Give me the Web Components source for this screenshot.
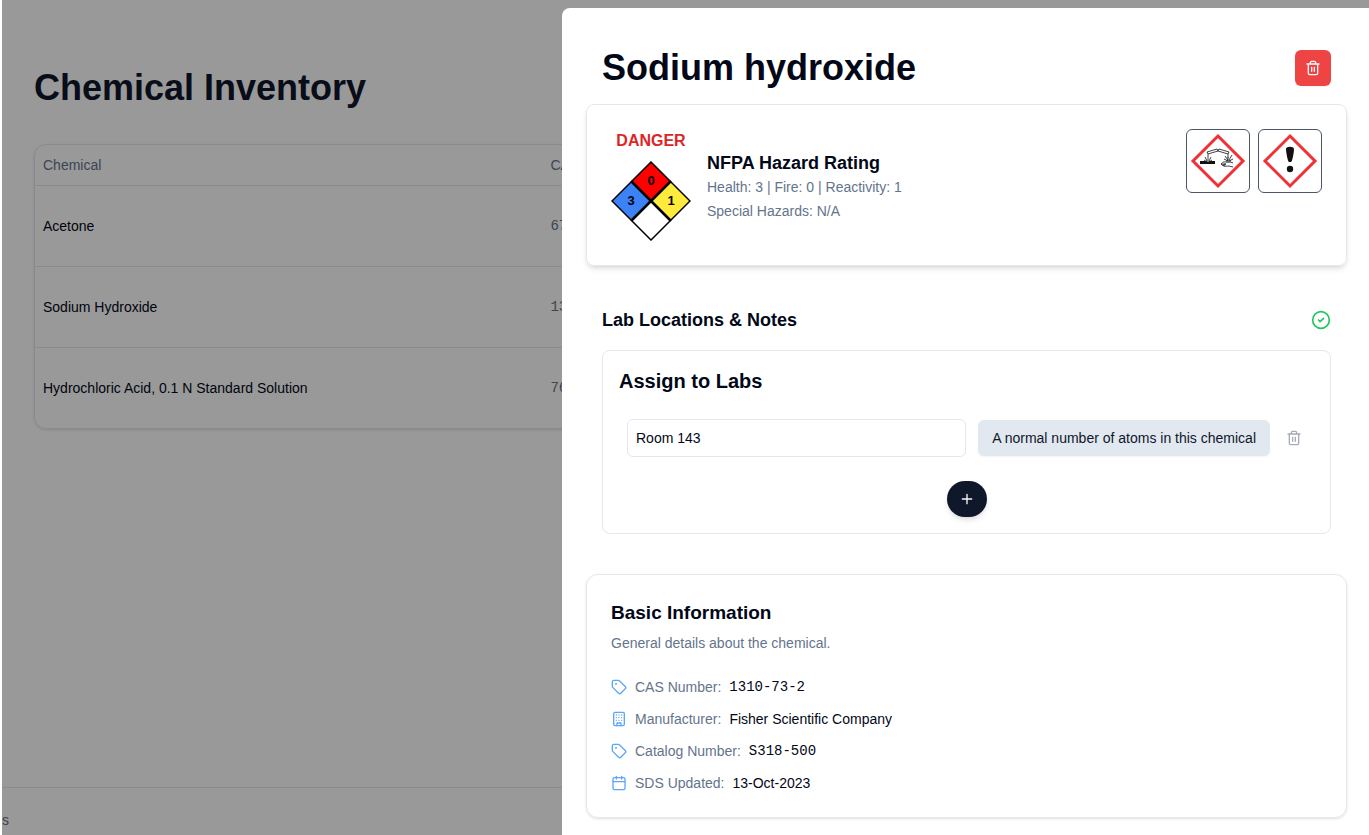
<!DOCTYPE html>
<html lang="en">
<head>
<meta charset="utf-8">
<title>Chemical Inventory</title>
<style>
  :root {
    --foreground: #020817;
    --primary: #0f172a;
    --muted: #64748b;
    --border: #e2e8f0;
    --shadow: 0 1px 3px rgba(0, 0, 0, .1), 0 1px 2px -1px rgba(0, 0, 0, .1);
    --shadow-md: 0 4px 6px -1px rgba(0, 0, 0, .1), 0 2px 4px -2px rgba(0, 0, 0, .1);
    --font-mono: "Liberation Mono", monospace;
  }
  body {
    margin: 0;
    overflow: hidden;
    background: #fff;
    color: var(--foreground);
    font: 14px/20px "Liberation Sans", Arial, sans-serif;
  }
</style>
</head>
<body>

<inventory-page>
  <chemical-table></chemical-table>
  <span slot="footer">s</span>
</inventory-page>

<side-drawer heading="Sodium hydroxide">
  <hazard-card signal="DANGER" health="3" fire="0" reactivity="1">
    <ghs-pictogram type="corrosive"></ghs-pictogram>
    <ghs-pictogram type="irritant"></ghs-pictogram>
  </hazard-card>
  <lab-section room="Room 143" note="A normal number of atoms in this chemical"></lab-section>
  <info-card>
    <span slot="title">Basic Information</span>
    <span slot="description">General details about the chemical.</span>
    <info-row icon="tag" label="CAS Number:" mono>1310-73-2</info-row>
    <info-row icon="building" label="Manufacturer:">Fisher Scientific Company</info-row>
    <info-row icon="tag" label="Catalog Number:" mono>S318-500</info-row>
    <info-row icon="calendar" label="SDS Updated:">13-Oct-2023</info-row>
  </info-card>
</side-drawer>

<script>
const ICONS = {
  trash: '<path d="M3 6h18M19 6v14c0 1-1 2-2 2H7c-1 0-2-1-2-2V6M8 6V4c0-1 1-2 2-2h4c1 0 2 1 2 2v2M10 11v6M14 11v6"/>',
  plus: '<path d="M5 12h14M12 5v14"/>',
  check: '<circle cx="12" cy="12" r="10"/><path d="m9 12 2 2 4-4"/>',
  tag: '<path d="M12.586 2.586A2 2 0 0 0 11.172 2H4a2 2 0 0 0-2 2v7.172a2 2 0 0 0 .586 1.414l8.704 8.704a2.426 2.426 0 0 0 3.42 0l6.58-6.58a2.426 2.426 0 0 0 0-3.42z"/><circle cx="7.5" cy="7.5" r=".5" fill="currentColor"/>',
  building: '<rect width="16" height="20" x="4" y="2" rx="2"/><path d="M9 22v-4h6v4M8 6h.01M16 6h.01M12 6h.01M12 10h.01M12 14h.01M16 10h.01M16 14h.01M8 10h.01M8 14h.01"/>',
  calendar: '<path d="M8 2v4M16 2v4M3 10h18"/><rect width="18" height="18" x="3" y="4" rx="2"/>'
}

customElements.define('line-icon', class extends HTMLElement {
  constructor() {
    super()
    this.attachShadow({mode: 'open'})
  }

  connectedCallback() {
    this.shadowRoot.innerHTML = `
      <style>
        :host { display: block; flex: none; width: 16px; height: 16px; }
        svg { display: block; width: 100%; height: 100%; }
      </style>
      <svg viewBox="0 0 24 24" fill="none" stroke="currentColor" stroke-width="2"
        stroke-linecap="round" stroke-linejoin="round" aria-hidden="true">${ICONS[this.getAttribute('name')]}</svg>
    `
  }
})

customElements.define('inventory-page', class extends HTMLElement {
  constructor() {
    super()
    this.attachShadow({mode: 'open'}).innerHTML = `
      <style>
        :host { display: flex; flex-direction: column; height: 100vh; margin-left: 2px; }
        main { flex: 1; padding: 68px 32px 0; }
        h1 { margin: 0 0 36px; color: var(--primary); font-size: 36px; line-height: 40px; }
        footer {
          border-top: 1px solid var(--border);
          padding: 24px 0 7px;
          line-height: 16px;
          color: #6b7280;
        }
      </style>
      <main><h1>Chemical Inventory</h1><slot></slot></main>
      <footer><slot name="footer"></slot></footer>
    `
  }
})

customElements.define('chemical-table', class extends HTMLElement {
  constructor() {
    super()
    const rows = [
      ['Acetone', '67'],
      ['Sodium Hydroxide', '1310'],
      ['Hydrochloric Acid, 0.1 N Standard Solution', '7647']
    ]
    this.attachShadow({mode: 'open'}).innerHTML = `
      <style>
        :host {
          display: block;
          border: 1px solid var(--border);
          border-radius: 12px;
          box-shadow: var(--shadow);
        }
        table { width: 100%; border-collapse: collapse; table-layout: fixed; }
        th, td { box-sizing: border-box; padding: 0 8px; text-align: left; font-weight: 400; }
        th { height: 40px; color: var(--muted); }
        th:first-child { width: 39%; }
        td { height: 81px; border-top: 1px solid var(--border); }
        td:last-child { color: var(--muted); font-family: var(--font-mono); }
      </style>
      <table>
        <thead><tr><th>Chemical</th><th>CAS</th></tr></thead>
        <tbody>${rows.map(([name, cas]) => `<tr><td>${name}</td><td>${cas}</td></tr>`).join('')}</tbody>
      </table>
    `
  }
})

customElements.define('side-drawer', class extends HTMLElement {
  constructor() {
    super()
    this.attachShadow({mode: 'open'})
  }

  connectedCallback() {
    this.shadowRoot.innerHTML = `
      <style>
        :host {
          position: fixed;
          inset: 0 0 0 2px;
          display: flex;
          justify-content: flex-end;
          padding-top: 8px;
          background: rgba(0, 0, 0, .4);
        }
        section {
          box-sizing: border-box;
          width: 59%;
          width: round(up, 59%, 1px);
          padding: 40px 22px 24px 24px;
          overflow: hidden;
          border-radius: 8px 0 0 0;
          background: #fff;
        }
        header {
          display: flex;
          align-items: center;
          justify-content: space-between;
          padding: 0 16px;
          margin-bottom: 16px;
        }
        h2 { margin: 0; font-size: 36px; line-height: 40px; }
        button {
          display: grid;
          place-items: center;
          width: 36px;
          height: 36px;
          padding: 0;
          border: 0;
          border-radius: 6px;
          background: #ef4444;
          color: #f8fafc;
          box-shadow: 0 1px 2px rgba(0, 0, 0, .05);
        }
        .body { display: flex; flex-direction: column; gap: 40px; }
      </style>
      <section role="dialog" aria-labelledby="heading">
        <header>
          <h2 id="heading">${this.getAttribute('heading')}</h2>
          <button type="button" aria-label="Delete chemical"><line-icon name="trash"></line-icon></button>
        </header>
        <div class="body"><slot></slot></div>
      </section>
    `
  }
})

customElements.define('nfpa-diamond', class extends HTMLElement {
  constructor() {
    super()
    this.attachShadow({mode: 'open'})
  }

  connectedCallback() {
    this.shadowRoot.innerHTML = `
      <style>
        :host { display: block; width: 80px; height: 80px; }
        svg { display: block; }
        text { font-size: 13px; font-weight: 700; text-anchor: middle; }
      </style>
      <svg width="80" height="80" viewBox="0 0 80 80">
        <g stroke="#000" stroke-width="1.5">
          <path fill="#f00" d="M40 1 59.5 20.5 40 40 20.5 20.5z"/>
          <path fill="#3b82f6" d="M20.5 20.5 40 40 20.5 59.5 1 40z"/>
          <path fill="#ffeb3b" d="M59.5 20.5 79 40 59.5 59.5 40 40z"/>
          <path fill="#fff" d="M40 40 59.5 59.5 40 79 20.5 59.5z"/>
        </g>
        <path stroke="#000" stroke-width="2.5" d="m20.5 20.5 39 39M59.5 20.5l-39 39"/>
        <text x="40" y="24">${this.getAttribute('fire')}</text>
        <text x="20" y="44">${this.getAttribute('health')}</text>
        <text x="60" y="44">${this.getAttribute('reactivity')}</text>
      </svg>
    `
  }
})

const PICTOGRAMS = {
  // two tilted tubes pouring on a metal bar and on a hand
  corrosive: `
    <g fill="none" stroke="#111" stroke-width=".8" stroke-linejoin="round">
      <path d="m17 19 10-3 1 2-10 3zM29 16l10 3-1 2-10-3z"/>
      <path d="M18 21v4M38 21v4"/>
      <path d="m15 24 2 4M21 24l-2 4M18 25v4M14 27l3 2M22 27l-3 2"/>
      <path d="m35 23 3 4M42 22l-3 5M38 24v4M34 26l4 2M43 26l-4 2M36 28h5"/>
      <path d="M43 30c-3-2-5 0-7-1-2-1-4 1-5 2 2 1 3-1 5 0l-3 1c2 2 4 1 6 1l4 1M31 31c1 1 2 2 4 2"/>
    </g>
    <path fill="#111" d="M10 28h6l2 1 2-1h5v3H10z"/>`,
  irritant: `
    <path fill="#111" d="M24 16c0-3 8-3 8 0 0 3-1 8-2 11.5-.5 2-3.500 2-4 0C25 24 24 19 24 16z"/>
    <circle cx="28" cy="36" r="3.2" fill="#111"/>`
}

customElements.define('ghs-pictogram', class extends HTMLElement {
  constructor() {
    super()
    this.attachShadow({mode: 'open'})
  }

  connectedCallback() {
    const type = this.getAttribute('type')
    this.shadowRoot.innerHTML = `
      <style>
        :host {
          box-sizing: border-box;
          display: grid;
          place-items: center;
          width: 64px;
          height: 64px;
          border: 1px solid #4b5563;
          border-radius: 6px;
        }
      </style>
      <svg width="56" height="56" viewBox="0 0 56 56" role="img" aria-label="${type}">
        <path fill="#fff" stroke="#ef3034" stroke-width="3" d="m28 3 25 25-25 25L3 28z"/>
        ${PICTOGRAMS[type]}
      </svg>
    `
  }
})

customElements.define('hazard-card', class extends HTMLElement {
  constructor() {
    super()
    this.attachShadow({mode: 'open'})
  }

  connectedCallback() {
    const health = this.getAttribute('health')
    const fire = this.getAttribute('fire')
    const reactivity = this.getAttribute('reactivity')
    this.shadowRoot.innerHTML = `
      <style>
        :host {
          display: flex;
          gap: 16px;
          padding: 24px;
          border: 1px solid var(--border);
          border-radius: 8px;
          box-shadow: var(--shadow-md);
        }
        .signal { display: flex; flex-direction: column; align-items: center; gap: 8px; }
        strong { color: #dc2626; font-size: 16px; line-height: 24px; }
        .rating { flex: 1; align-self: center; color: var(--muted); }
        h3 { margin: 0; color: var(--foreground); font-size: 18px; line-height: 28px; }
        p { margin: 0 0 4px; }
        p:last-child { margin: 0; }
        .pictograms { display: flex; align-items: flex-start; gap: 8px; }
      </style>
      <div class="signal">
        <strong>${this.getAttribute('signal')}</strong>
        <nfpa-diamond health="${health}" fire="${fire}" reactivity="${reactivity}"></nfpa-diamond>
      </div>
      <div class="rating">
        <h3>NFPA Hazard Rating</h3>
        <p>Health: ${health} | Fire: ${fire} | Reactivity: ${reactivity}</p>
        <p>Special Hazards: N/A</p>
      </div>
      <div class="pictograms"><slot></slot></div>
    `
  }
})

customElements.define('lab-section', class extends HTMLElement {
  constructor() {
    super()
    this.attachShadow({mode: 'open'})
  }

  connectedCallback() {
    this.shadowRoot.innerHTML = `
      <style>
        :host { display: block; padding: 0 16px; }
        header { display: flex; align-items: center; justify-content: space-between; margin-bottom: 16px; }
        h3, h4 { margin: 0; line-height: 28px; }
        h3 { font-size: 18px; }
        h4 { font-size: 20px; }
        header line-icon { width: 20px; height: 20px; color: #22c55e; }
        .panel {
          display: grid;
          gap: 24px;
          padding: 16px;
          border: 1px solid var(--border);
          border-radius: 8px;
        }
        .row { display: flex; align-items: center; gap: 12px; padding: 0 8px; }
        input, button { box-sizing: border-box; font: inherit; color: inherit; }
        input {
          flex: 1;
          min-width: 0;
          height: 38px;
          padding: 0 8px;
          border: 1px solid var(--border);
          border-radius: 6px;
          background: #fff;
        }
        button { display: grid; place-items: center; height: 36px; padding: 0; border: 0; }
        .note {
          padding: 0 14px;
          border-radius: 6px;
          background: #e2e8f0;
          color: var(--primary);
          box-shadow: 0 1px 2px rgba(0, 0, 0, .05);
        }
        .remove { width: 24px; background: none; color: #a8abb3; }
        .add {
          justify-self: center;
          width: 40px;
          border-radius: 18px;
          background: var(--primary);
          color: #f8fafc;
          box-shadow: var(--shadow-md);
        }
      </style>
      <header><h3>Lab Locations &amp; Notes</h3><line-icon name="check"></line-icon></header>
      <div class="panel">
        <h4>Assign to Labs</h4>
        <div class="row">
          <input type="text" aria-label="Lab" value="${this.getAttribute('room')}">
          <button class="note" type="button">${this.getAttribute('note')}</button>
          <button class="remove" type="button" aria-label="Remove lab"><line-icon name="trash"></line-icon></button>
        </div>
        <button class="add" type="button" aria-label="Add lab"><line-icon name="plus"></line-icon></button>
      </div>
    `
  }
})

customElements.define('info-card', class extends HTMLElement {
  constructor() {
    super()
    this.attachShadow({mode: 'open'}).innerHTML = `
      <style>
        :host {
          display: block;
          padding: 24px;
          border: 1px solid var(--border);
          border-radius: 12px;
          box-shadow: var(--shadow);
        }
        h3 { margin: 0 0 6px; font-size: 19px; line-height: 28px; }
        p { margin: 0 0 24px; color: var(--muted); }
        .rows { display: grid; gap: 12px; }
      </style>
      <h3><slot name="title"></slot></h3>
      <p><slot name="description"></slot></p>
      <div class="rows"><slot></slot></div>
    `
  }
})

customElements.define('info-row', class extends HTMLElement {
  constructor() {
    super()
    this.attachShadow({mode: 'open'})
  }

  connectedCallback() {
    this.shadowRoot.innerHTML = `
      <style>
        :host { display: flex; align-items: center; gap: 8px; }
        line-icon { color: #60a5fa; }
        .label { color: var(--muted); }
        :host([mono]) .value { font-family: var(--font-mono); }
      </style>
      <line-icon name="${this.getAttribute('icon')}"></line-icon>
      <span class="label">${this.getAttribute('label')}</span>
      <span class="value"><slot></slot></span>
    `
  }
})
</script>
</body>
</html>
